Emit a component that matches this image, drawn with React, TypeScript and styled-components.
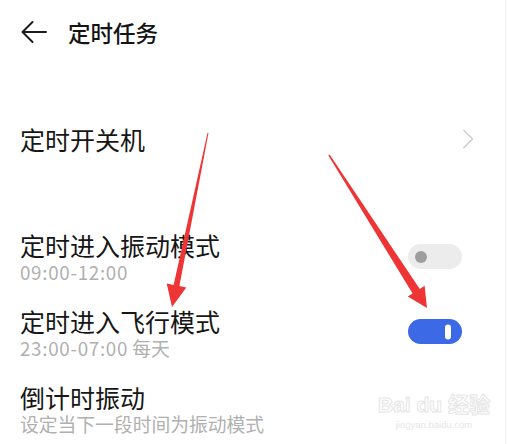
import React from "react";
import styled, { createGlobalStyle } from "styled-components";

const GlobalStyle = createGlobalStyle`
  html, body {
    margin: 0;
    padding: 0;
    background: #ffffff;
  }
  body {
    font-family: "Noto Sans CJK SC", "Noto Sans", sans-serif;
    color: #161616;
  }
`;

type Task = {
  title: string;
  time?: string;
  note?: string;
  toggle?: "on" | "off";
};

const tasks: Task[] = [
  { title: "定时进入振动模式", time: "09:00-12:00", toggle: "off" },
  { title: "定时进入飞行模式", time: "23:00-07:00", note: " 每天", toggle: "on" },
  { title: "倒计时振动", note: "设定当下一段时间为振动模式" },
];

export default function App() {
  return (
    <>
      <GlobalStyle />
      <Page>
        <Header>
          <BackButton aria-label="back">
            <svg width="30" height="24" viewBox="0 0 30 24">
              <path
                d="M26 12H3M12.5 2L2.5 12L12.5 22"
                fill="none"
                stroke="#1c1c1c"
                strokeWidth="2"
                strokeLinecap="round"
                strokeLinejoin="round"
              />
            </svg>
          </BackButton>
          <HeaderTitle>定时任务</HeaderTitle>
        </Header>

        <LinkRow>
          <RowTitle>定时开关机</RowTitle>
          <svg width="12" height="20" viewBox="0 0 12 20">
            <path
              d="M1.5 1L10.5 10L1.5 19"
              fill="none"
              stroke="#cfcfcf"
              strokeWidth="1.6"
            />
          </svg>
        </LinkRow>

        <TaskList>
          {tasks.map((t) => (
            <TaskRow key={t.title}>
              <TextBlock>
                <RowTitle>{t.title}</RowTitle>
                <RowSub>
                  {t.time && <Time>{t.time}</Time>}
                  {t.note}
                </RowSub>
              </TextBlock>
              {t.toggle && (
                <Switch $on={t.toggle === "on"}>
                  <Knob $on={t.toggle === "on"} />
                </Switch>
              )}
            </TaskRow>
          ))}
        </TaskList>

        <Watermark>
          <WatermarkLogo>Bai du 经验</WatermarkLogo>
          <WatermarkUrl>jingyan.baidu.com</WatermarkUrl>
        </Watermark>

        <Arrows width="508" height="444" viewBox="0 0 508 444">
          <polygon
            points="208.5,133 207.5,133 173.6,284.9 166.7,283.5 172,307 186.3,287.5 179.4,286.1"
            fill="#ee3434"
          />
          <polygon
            points="329.6,154.6 328.4,155.4 412.6,293.4 407.8,296.6 427,308 424.6,285.8 419.8,288.9"
            fill="#ee3434"
          />
        </Arrows>
      </Page>
    </>
  );
}

const Page = styled.div`
  position: relative;
  width: 505px;
  height: 444px;
  overflow: hidden;
  border-right: 1px solid #eeeeee;
`;

const Header = styled.div`
  display: flex;
  align-items: center;
  height: 64px;
  padding-left: 20px;
`;

const BackButton = styled.div`
  display: flex;
  align-items: center;
  width: 30px;
  height: 24px;
  margin-right: 18px;
`;

const HeaderTitle = styled.div`
  font-size: 22.5px;
  line-height: 30px;
  font-weight: 500;
  color: #141414;
`;

const LinkRow = styled.div`
  display: flex;
  align-items: center;
  justify-content: space-between;
  height: 70px;
  margin-top: 40px;
  padding: 0 31px 0 20px;
`;

const RowTitle = styled.div`
  font-size: 25px;
  line-height: 30px;
  color: #161616;
`;

const RowSub = styled.div`
  font-size: 18.8px;
  line-height: 24px;
  color: #b0b0b0;
`;

const Time = styled.span`
  letter-spacing: 0.7px;
`;

const TaskList = styled.div`
  display: flex;
  flex-direction: column;
  gap: 22px;
  margin-top: 56px;
`;

const TaskRow = styled.div`
  display: flex;
  align-items: center;
  justify-content: space-between;
  padding: 0 43px 0 20px;
`;

const TextBlock = styled.div`
  display: flex;
  flex-direction: column;
`;

const Switch = styled.div<{ $on: boolean }>`
  position: relative;
  width: 54px;
  height: 25px;
  border-radius: 13px;
  background: ${(p) => (p.$on ? "#3c6ae6" : "#ececec")};
  margin-top: ${(p) => (p.$on ? "-3px" : "-1px")};
`;

const Knob = styled.div<{ $on: boolean }>`
  position: absolute;
  top: 50%;
  transform: translateY(-50%);
  ${(p) =>
    p.$on
      ? `
    right: 11px;
    width: 6px;
    height: 15px;
    border-radius: 3px;
    background: #ffffff;
  `
      : `
    left: 7px;
    width: 12px;
    height: 12px;
    border-radius: 50%;
    background: #9d9d9d;
  `}
`;

const Watermark = styled.div`
  position: absolute;
  left: 388px;
  top: 392px;
  display: flex;
  flex-direction: column;
  align-items: center;
  width: 92px;
  pointer-events: none;
`;

const WatermarkLogo = styled.div`
  font-family: "Liberation Sans", "Noto Sans CJK SC", sans-serif;
  font-size: 21px;
  line-height: 26px;
  font-weight: 700;
  color: #ffffff;
  -webkit-text-stroke: 1px #e6e6e6;
  white-space: nowrap;
`;

const WatermarkUrl = styled.div`
  font-family: "Liberation Sans", sans-serif;
  font-size: 9.5px;
  line-height: 14px;
  color: #e6e6e6;
  white-space: nowrap;
`;

const Arrows = styled.svg`
  position: absolute;
  left: 0;
  top: 0;
  pointer-events: none;
`;
